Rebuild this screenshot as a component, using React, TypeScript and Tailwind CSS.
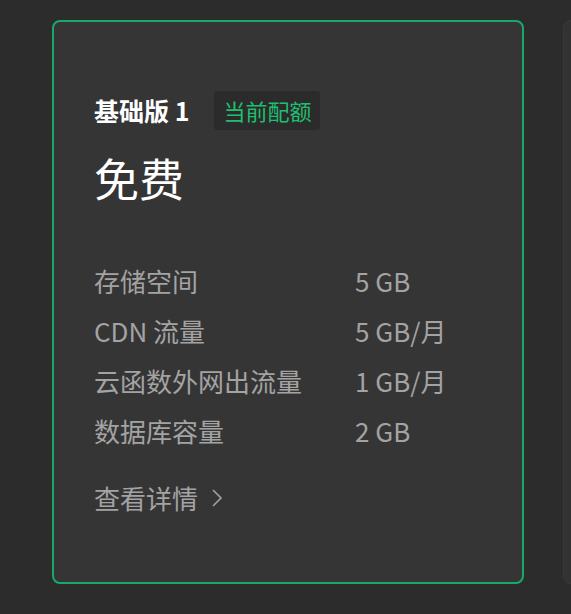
import React from 'react'

const quota = [
  { name: '存储空间', value: '5 GB' },
  { name: 'CDN 流量', value: '5 GB/月' },
  { name: '云函数外网出流量', value: '1 GB/月' },
  { name: '数据库容量', value: '2 GB' },
]

function PlanCard() {
  return (
    <div className="w-[472px] h-[564px] shrink-0 rounded-[8px] border-2 border-[#1aa86a] bg-[#353535] pt-[69px] pl-[40px]">
      <div className="flex items-center gap-[25px]">
        <h3 className="text-[25px] font-semibold text-white leading-none">基础版 1</h3>
        <span className="h-[39px] px-[9px] flex items-center rounded-[3px] bg-[#2b2b2b] text-[22px] text-[#1fbf6f]">当前配额</span>
      </div>
      <div className="mt-[14px] text-[45px] leading-[1.5] text-white">免费</div>
      <ul className="mt-[44px]">
        {quota.map((q) => (
          <li key={q.name} className="flex h-[50px] items-center text-[26px] text-[#a3a3a3]">
            <span className="w-[261px]">{q.name}</span>
            <span>{q.value}</span>
          </li>
        ))}
      </ul>
      <a className="mt-[17px] flex h-[50px] items-center gap-[13px] text-[26px] text-[#a3a3a3] cursor-pointer">
        查看详情
        <svg width="12" height="20" viewBox="0 0 12 20" fill="none" stroke="currentColor" strokeWidth="1.6">
          <path d="M2 2l8 8-8 8" />
        </svg>
      </a>
    </div>
  )
}

export default function App() {
  return (
    <div
      className="min-h-screen h-[614px] overflow-hidden bg-[#2c2c2c] pt-[20px] pl-[52px] flex gap-[39px]"
      style={{ fontFamily: '"Noto Sans CJK SC", "Noto Sans", sans-serif' }}
    >
      <PlanCard />
      <div className="w-[472px] h-[564px] shrink-0 rounded-[8px] border border-[#393939] bg-[#323232]" />
    </div>
  )
}
